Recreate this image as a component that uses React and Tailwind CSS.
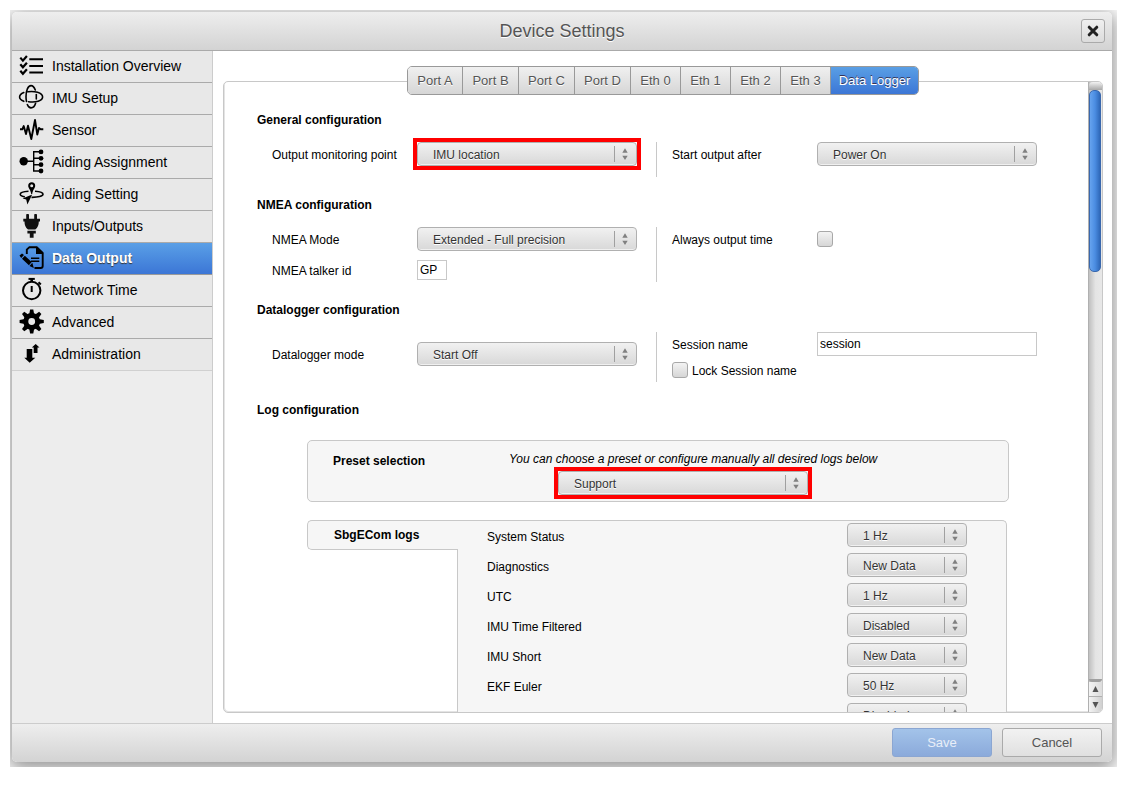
import { useState } from "react";

const ICONS = {
  overview: (
    <g fill="none" stroke="#000">
      <path d="M1.3 3.600L3.900 6.600L7.900 2M1.300 10.300L3.900 13.300L7.900 8.700M1.300 16.800L3.900 19.800L7.900 15.200" strokeWidth="2.200" />
      <path d="M10.300 5.300H24M10.300 12H24M10.300 18.400H24" strokeWidth="2" />
    </g>
  ),
  imu: (
    <g fill="none" stroke="#000" strokeWidth="1.600" strokeLinecap="round">
      <path d="M16.300 4C15.200 1 13.600 -0.400 12 -0.400C9 -0.400 7 4.500 7 10.700C7 12.500 7.200 14.200 7.500 15.500" />
      <path d="M8.300 18.500C9.200 20.700 10.500 21.900 12 21.900C14 21.900 15.800 20 16.600 17.300" />
      <path d="M8.800 5.800C15 4.800 23.600 6.500 23.600 11C23.600 15 16.500 16.600 9.500 15.700" />
      <path d="M4.800 6.600C2 7.800 0.600 9.300 0.600 11C0.600 12.700 2 14.200 4.800 15.300" />
      <path d="M17.300 8.600V13" />
    </g>
  ),
  sensor: (
    <path
      d="M1 11.300H3.300L4.700 8L7 16L9 7.700L12.300 21L16 2L18.300 16.500L20 10L21.700 11.300H24.300"
      fill="none" stroke="#000" strokeWidth="1.900" strokeLinejoin="round"
    />
  ),
  assignment: (
    <g>
      <circle cx="4.700" cy="11.300" r="4.200" />
      <path d="M5 11.300H14.500M22 1.700H14.700V21H22M14.700 8.300H22M14.700 14.700H22" fill="none" stroke="#000" strokeWidth="1.400" />
      <circle cx="22" cy="1.900" r="2.400" />
      <circle cx="22" cy="8.300" r="2.400" />
      <circle cx="22" cy="14.700" r="2.400" />
      <circle cx="22" cy="21" r="2.400" />
    </g>
  ),
  setting: (
    <g>
      <path d="M12.700 0.200A3.500 3.500 0 0 0 9.200 3.700C9.200 6.200 11.800 8 12.200 12H13.200C13.600 8 16.200 6.200 16.200 3.700A3.500 3.500 0 0 0 12.700 0.200ZM12.700 2.200A1.500 1.500 0 1 1 12.700 5.200A1.500 1.500 0 0 1 12.700 2.200Z" fillRule="evenodd" />
      <path d="M9.500 9.300C4.500 9.600 1.200 10.800 1.200 12.300C1.200 13.400 3 14.300 5.800 14.900M12.500 15.400C19 15.500 24 14.200 24 12.300C24 10.800 21 9.600 16 9.300" fill="none" stroke="#000" strokeWidth="1.600" />
      <path d="M3.600 16.400L13.200 12.600L8.400 22.500L7.200 17.600Z" />
    </g>
  ),
  plug: (
    <g fill="#111">
      <rect x="7.200" y="0" width="2.800" height="6" rx="0.800" />
      <rect x="15.200" y="0" width="2.800" height="6" rx="0.800" />
      <path d="M4.300 4.800H21V7.500H19.800C19.800 11 18.800 13.500 16.300 15.500H9C6.500 13.500 5.500 11 5.500 7.500H4.300Z" />
      <path d="M8.400 16.800H16.800V19.400H14.600V23.700H10.800V19.400H8.400Z" />
    </g>
  ),
  output: (
    <g>
      <path d="M7.800 8V3.700L10.200 1.300H18L23.700 7V20C23.700 21.300 22.900 22 21.700 22H15.500" fill="none" stroke="#000" strokeWidth="1.900" strokeLinejoin="round" />
      <path d="M17 0.800L24.400 8H17Z" />
      <path d="M12 12.300H20.300M12 15.200H20.300" stroke="#000" strokeWidth="1.400" />
      <path d="M0.500 9.600L3 7.400L5 9L2.200 12ZM5.800 9.700L12.700 16L9.900 19.200L3 12.800ZM13.300 16.800L14.800 22L10.500 19.900Z" />
    </g>
  ),
  time: (
    <g fill="none" stroke="#000">
      <circle cx="12.700" cy="12.500" r="8.700" strokeWidth="2" />
      <path d="M9.500 0.900H15.800" strokeWidth="2" />
      <path d="M12.700 1V3.800" strokeWidth="2.600" />
      <path d="M19.500 4.200L21.800 6.500" strokeWidth="2" />
      <path d="M12.700 8V14" strokeWidth="2" />
    </g>
  ),
  gear: (
    <g>
      {[0, 45, 90, 135, 180, 225, 270, 315].map((angle) => (
        <path key={angle} d="M10.200 4.500L11.100 -0.600H14.300L15.200 4.500Z" transform={`rotate(${angle} 12.700 11.500)`} />
      ))}
      <circle cx="12.700" cy="11.500" r="5.900" fill="none" stroke="#000" strokeWidth="5" />
    </g>
  ),
  admin: (
    <g>
      <path d="M7.700 7H13.300V15.700H16.300L10.700 20.800L5.300 15.700H7.700Z" />
      <path d="M14.700 11V5.400H12.800L16.700 1.900L20.500 5.400H18.500V11Z" />
    </g>
  ),
};

const MENU = [
  ["Installation Overview", "overview"],
  ["IMU Setup", "imu"],
  ["Sensor", "sensor"],
  ["Aiding Assignment", "assignment"],
  ["Aiding Setting", "setting"],
  ["Inputs/Outputs", "plug"],
  ["Data Output", "output"],
  ["Network Time", "time"],
  ["Advanced", "gear"],
  ["Administration", "admin"],
];

const TABS = [
  ["Port A", "w-[55px]"],
  ["Port B", "w-[56px]"],
  ["Port C", "w-[56px]"],
  ["Port D", "w-[56px]"],
  ["Eth 0", "w-[50px]"],
  ["Eth 1", "w-[50px]"],
  ["Eth 2", "w-[50px]"],
  ["Eth 3", "w-[50px]"],
  ["Data Logger", "w-[87px]"],
];

const LOGS = [
  ["System Status", "1 Hz"],
  ["Diagnostics", "New Data"],
  ["UTC", "1 Hz"],
  ["IMU Time Filtered", "Disabled"],
  ["IMU Short", "New Data"],
  ["EKF Euler", "50 Hz"],
];

const RATES = ["Disabled", "New Data", "1 Hz", "50 Hz"];

function Select({ id, value, options = [value], width = "w-[220px]", marked = false, label }) {
  return (
    <div className={`relative h-6 shrink-0 ${width} ${marked ? "shadow-[0_0_0_4px_#ff0000]" : ""}`}>
      <select
        id={id}
        aria-label={label}
        defaultValue={value}
        className="block h-6 w-full appearance-none rounded-[4px] border border-[#b0b0b0] bg-linear-to-b from-[#f1f1f1] to-[#d8d8d8] pt-[2px] pr-6 pl-[15px] text-[12px] text-[#333] shadow-[inset_0_-1px_0_#f0f0f0] [text-shadow:0_1px_0_#fff]"
      >
        {options.map((option) => (
          <option key={option}>{option}</option>
        ))}
      </select>
      <div className="pointer-events-none absolute inset-y-1 right-2 flex w-[15px] items-center justify-end border-l border-[#a0a0a0] pr-px">
        <svg width="6" height="12" viewBox="0 0 6 12" fill="#808080" aria-hidden="true">
          <path d="M0.300 4.700L3 0.200L5.700 4.700ZM0.300 7.700H5.700L3 12Z" />
        </svg>
      </div>
    </div>
  );
}

function Checkbox({ id }) {
  return (
    <input
      id={id}
      type="checkbox"
      className="size-4 shrink-0 appearance-none rounded-[3px] border border-[#a8a8a8] bg-linear-to-b from-[#f3f3f3] to-[#d6d6d6] checked:from-[#5b9fe6] checked:to-[#3d76d6]"
    />
  );
}

function Section({ title, height, left, right }) {
  return (
    <section className="mb-5">
      <h2 className="mb-3.5 text-[12px] leading-4 font-bold">{title}</h2>
      <div className={`flex pl-[15px] ${height}`}>
        <div className="flex w-[384px] shrink-0 flex-col">{left}</div>
        <div className="border-l border-[#c8c8c8] pl-[15px]">{right}</div>
      </div>
    </section>
  );
}

function Field({ id, label, children }) {
  return (
    <div className="flex h-6 items-center">
      <label htmlFor={id} className="w-[145px] shrink-0 pt-[2px] leading-4">
        {label}
      </label>
      {children}
    </div>
  );
}

function ScrollTrack() {
  return (
    <div className="flex w-[14px] shrink-0 flex-col border-l border-[#b0b0b0] bg-linear-to-r from-[#c0c0c0] via-[#e4e4e4] to-[#e8e8e8]" aria-hidden="true">
      <div className="h-2 rounded-t-[4px] bg-linear-to-b from-[#f2f2f2] to-[#a8a8a8]" />
      <div className="h-[182px] w-[12px] rounded-[5px] border border-[#3a68ad] bg-linear-to-r from-[#66a3ee] via-[#4b8de2] to-[#2f68b8]" />
      <div className="flex-1" />
      <div className="h-[3px] rounded-b-[5px] bg-[#a0a0a0]" />
      <div className="flex h-[15px] items-center justify-center border-b border-[#b0b0b0] bg-linear-to-r from-[#f4f4f4] to-[#dcdcdc]">
        <svg width="7" height="6" viewBox="0 0 7 6" fill="#555"><path d="M0.500 6L3.500 0L6.500 6Z" /></svg>
      </div>
      <div className="flex h-[15px] items-center justify-center rounded-br-[4px] bg-linear-to-r from-[#f4f4f4] to-[#d0d0d0]">
        <svg width="7" height="6" viewBox="0 0 7 6" fill="#555"><path d="M0.500 0H6.500L3.500 6Z" /></svg>
      </div>
    </div>
  );
}

export default function App() {
  const [page, setPage] = useState("Data Output");
  const [tab, setTab] = useState("Data Logger");

  return (
    <div className="h-screen bg-white pt-[10px] pr-5 pb-5 pl-[10px] font-['Liberation_Sans',Arial,sans-serif] text-[12px] text-black">
      <div className="h-full overflow-hidden pt-[2px] pr-[5px] pb-[5px] pl-[2px]">
        <main className="flex h-full flex-col rounded-[5px] bg-white shadow-[0_4px_18px_3px_rgba(0,0,0,0.42)]">
          <header className="flex h-[39px] shrink-0 items-center rounded-t-[5px] border-b border-[#aaa] bg-linear-to-b from-[#eeeeee] to-[#d3d3d3] pr-[7px] pl-[31px]">
            <h1 className="flex-1 text-center text-[18px] text-[#555] [text-shadow:0_1px_0_#fff]">Device Settings</h1>
            <button type="button" aria-label="Close" className="flex size-6 items-center justify-center rounded-[3px] border border-[#aaa] bg-linear-to-b from-[#f0f0f0] to-[#dcdcdc]">
              <svg width="12" height="12" viewBox="0 0 12 12" aria-hidden="true">
                <path d="M2.200 2.200L9.800 9.800M9.800 2.200L2.200 9.800" stroke="#222" strokeWidth="3" strokeLinecap="round" />
              </svg>
            </button>
          </header>

          <div className="flex min-h-0 flex-1">
            <nav className="w-[201px] shrink-0 border-r border-[#ccc] bg-[#ededed]">
              {MENU.map(([name, icon]) => (
                <button
                  key={name}
                  type="button"
                  onClick={() => setPage(name)}
                  className={`flex h-8 w-full items-center gap-2 border-b pl-[7px] text-left text-[14px] last:border-[#d0d0d0] ${
                    page === name
                      ? "border-[#9a9a9a] bg-linear-to-b from-[#5a9fe6] to-[#3c76d6] font-bold text-white [text-shadow:0_1px_1px_#333]"
                      : "border-[#aaa] bg-[#e8e8e8]"
                  }`}
                >
                  <svg width="25" height="25" viewBox="0 0 25 25" className="shrink-0 overflow-visible" aria-hidden="true">
                    {ICONS[icon]}
                  </svg>
                  {name}
                </button>
              ))}
            </nav>

            <div className="flex min-w-0 flex-1 flex-col pt-[15px] pr-[9px] pb-[10px] pl-[10px]">
              <div role="tablist" className="z-10 flex h-[29px] shrink-0 self-center overflow-hidden rounded-[5px] border border-[#999]">
                {TABS.map(([name, width]) => (
                  <button
                    key={name}
                    type="button"
                    role="tab"
                    aria-selected={tab === name}
                    onClick={() => setTab(name)}
                    className={`border-r border-[#999] text-center text-[13px] whitespace-nowrap last:border-r-0 ${width} ${
                      tab === name
                        ? "bg-linear-to-b from-[#5a9fe4] to-[#3c76d6] text-white [text-shadow:0_-1px_0_#335]"
                        : "bg-linear-to-b from-[#f0f0f0] to-[#d6d6d6] text-[#555] [text-shadow:0_1px_0_#fff]"
                    }`}
                  >
                    {name}
                  </button>
                ))}
              </div>

              <div className="-mt-[14px] flex min-h-0 flex-1 overflow-hidden rounded-[5px] border border-[#c8c8c8] shadow-[inset_1px_-1px_0_#e4e4e4]">
                <div className="min-w-0 flex-1 overflow-y-auto pt-[30px] pl-[33px] [scrollbar-width:none]">
                  <Section
                    title="General configuration"
                    height="h-[35px]"
                    left={
                      <Field id="monitor" label="Output monitoring point">
                        <Select id="monitor" value="IMU location" marked />
                      </Field>
                    }
                    right={
                      <Field id="start" label="Start output after">
                        <Select id="start" value="Power On" />
                      </Field>
                    }
                  />
                  <Section
                    title="NMEA configuration"
                    height="h-[55px]"
                    left={
                      <div className="flex flex-col gap-[7px]">
                        <Field id="nmea" label="NMEA Mode">
                          <Select id="nmea" value="Extended - Full precision" />
                        </Field>
                        <Field id="talker" label="NMEA talker id">
                          <input id="talker" defaultValue="GP" className="h-5 w-[30px] border border-[#c8c8c8] px-[2px]" />
                        </Field>
                      </div>
                    }
                    right={
                      <Field id="always" label="Always output time">
                        <Checkbox id="always" />
                      </Field>
                    }
                  />
                  <Section
                    title="Datalogger configuration"
                    height="h-[50px]"
                    left={
                      <div className="pt-[10px]">
                        <Field id="mode" label="Datalogger mode">
                          <Select id="mode" value="Start Off" />
                        </Field>
                      </div>
                    }
                    right={
                      <div>
                        <Field id="session" label="Session name">
                          <input id="session" defaultValue="session" className="h-6 w-[220px] border border-[#c8c8c8] px-[2px]" />
                        </Field>
                        <div className="mt-[5px] flex items-center gap-1">
                          <Checkbox id="lock" />
                          <label htmlFor="lock" className="pt-[2px] leading-4">Lock Session name</label>
                        </div>
                      </div>
                    }
                  />

                  <h2 className="mb-[22px] leading-4 font-bold">Log configuration</h2>

                  <div className="mr-[79px] ml-[50px] flex h-[62px] rounded-[5px] border border-[#c8c8c8] bg-[#f6f6f6]">
                    <label htmlFor="preset" className="w-[201px] shrink-0 pt-3 pl-[25px] leading-4 font-bold">
                      Preset selection
                    </label>
                    <div className="pt-[10px]">
                      <p className="leading-4 italic">You can choose a preset or configure manually all desired logs below</p>
                      <div className="mt-1 pl-[49px]">
                        <Select id="preset" value="Support" width="w-[250px]" marked />
                      </div>
                    </div>
                  </div>

                  <div className="mt-[18px] mr-[81px] ml-[50px] flex">
                    <div className="flex w-[151px] shrink-0 flex-col">
                      <button type="button" className="h-[30px] rounded-l-[5px] border-y border-l border-[#c8c8c8] bg-[#f6f6f6] pl-[26px] text-left font-bold">
                        SbgECom logs
                      </button>
                      <div className="flex-1 border-r border-[#c8c8c8]" />
                    </div>
                    <ul className="flex flex-1 flex-col gap-[6px] rounded-tr-[5px] border-t border-r border-[#c8c8c8] bg-[#f6f6f6] pt-[2px] pr-[39px] pb-5 pl-[29px]">
                      {LOGS.map(([name, rate], index) => (
                        <li key={name} className="flex h-6 items-center justify-between">
                          <label htmlFor={`log-${index}`} className="pt-[3px] leading-4">{name}</label>
                          <Select id={`log-${index}`} value={rate} options={RATES} width="w-[120px]" />
                        </li>
                      ))}
                      <li className="flex h-6 items-center justify-end">
                        <Select label="Log rate" value="Disabled" options={RATES} width="w-[120px]" />
                      </li>
                    </ul>
                  </div>
                </div>
                <ScrollTrack />
              </div>
            </div>
          </div>

          <footer className="flex h-[39px] shrink-0 items-start justify-end gap-[10px] rounded-b-[5px] border-t border-[#ccc] bg-linear-to-b from-[#eeeeee] to-[#d3d3d3] pt-1 pr-[10px] text-[13px]">
            <button type="button" className="h-[29px] w-[100px] rounded-[3px] border border-[#8ba6d2] bg-linear-to-b from-[#a3c3e9] to-[#8baadb] text-[#e8eef8]">
              Save
            </button>
            <button type="button" className="h-[29px] w-[100px] rounded-[3px] border border-[#aaa] bg-linear-to-b from-[#f2f2f2] to-[#e0e0e0] text-[#555]">
              Cancel
            </button>
          </footer>
        </main>
      </div>
    </div>
  );
}
